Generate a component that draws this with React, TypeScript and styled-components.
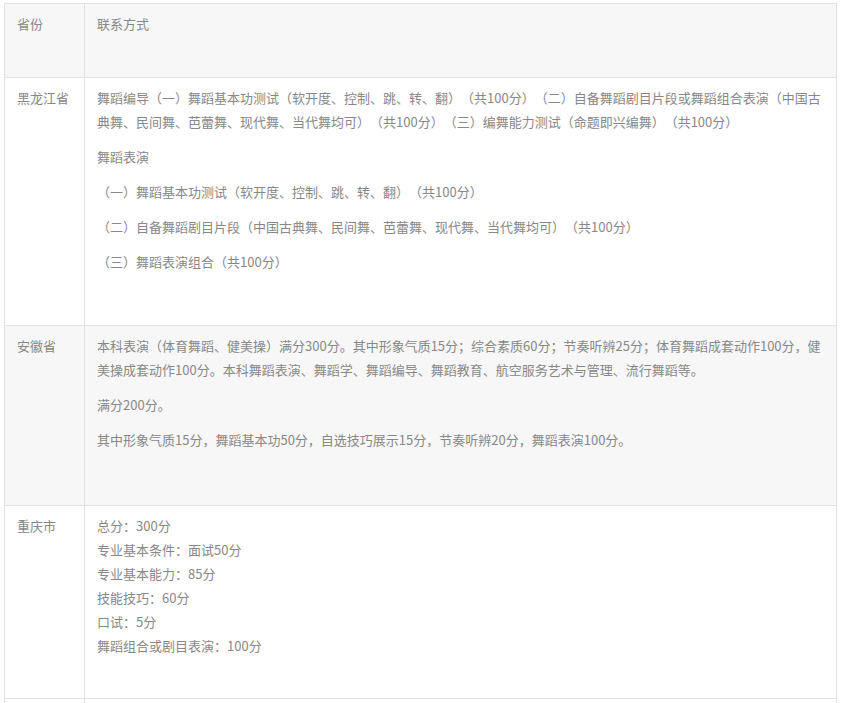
import React from 'react';
import styled, { createGlobalStyle } from 'styled-components';

const GlobalStyle = createGlobalStyle`
  body {
    margin: 0;
    background: #ffffff;
    font-family: "Noto Sans CJK SC", "Noto Sans", sans-serif;
  }
`;

const Wrapper = styled.div`
  padding: 3px 0 0 4px;
`;

const Table = styled.table`
  width: 833px;
  border-collapse: collapse;
  table-layout: fixed;
  font-size: 13px;
  line-height: 24px;
  color: #888;
  text-spacing-trim: space-all;
`;

const Row = styled.tr<{ $grey?: boolean; $h: number }>`
  height: ${(p) => p.$h}px;
  background: ${(p) => (p.$grey ? '#f7f7f7' : '#ffffff')};
`;

const Cell = styled.td`
  border: 1px solid #e2e2e2;
  padding: 8px 12px;
  vertical-align: top;
`;

const Para = styled.p`
  margin: 0 0 11px;
`;

const rows = [
  {
    province: '黑龙江省',
    grey: false,
    h: 248,
    paras: [
      '舞蹈编导（一）舞蹈基本功测试（软开度、控制、跳、转、翻）（共100分）（二）自备舞蹈剧目片段或舞蹈组合表演（中国古典舞、民间舞、芭蕾舞、现代舞、当代舞均可）（共100分）（三）编舞能力测试（命题即兴编舞）（共100分）',
      '舞蹈表演',
      '（一）舞蹈基本功测试（软开度、控制、跳、转、翻）（共100分）',
      '（二）自备舞蹈剧目片段（中国古典舞、民间舞、芭蕾舞、现代舞、当代舞均可）（共100分）',
      '（三）舞蹈表演组合（共100分）',
    ],
  },
  {
    province: '安徽省',
    grey: true,
    h: 180,
    paras: [
      '本科表演（体育舞蹈、健美操）满分300分。其中形象气质15分；综合素质60分；节奏听辨25分；体育舞蹈成套动作100分，健美操成套动作100分。本科舞蹈表演、舞蹈学、舞蹈编导、舞蹈教育、航空服务艺术与管理、流行舞蹈等。',
      '满分200分。',
      '其中形象气质15分，舞蹈基本功50分，自选技巧展示15分，节奏听辨20分，舞蹈表演100分。',
    ],
  },
];

const chongqing = [
  '总分：300分',
  '专业基本条件：面试50分',
  '专业基本能力：85分',
  '技能技巧：60分',
  '口试：5分',
  '舞蹈组合或剧目表演：100分',
];

const App = () => {
  return (
    <>
      <GlobalStyle />
      <Wrapper>
        <Table>
          <colgroup>
            <col style={{ width: 80 }} />
            <col />
          </colgroup>
          <tbody>
            <Row $grey $h={74}>
              <Cell>省份</Cell>
              <Cell>联系方式</Cell>
            </Row>
            {rows.map((r) => (
              <Row key={r.province} $grey={r.grey} $h={r.h}>
                <Cell>{r.province}</Cell>
                <Cell>
                  {r.paras.map((t) => (
                    <Para key={t}>{t}</Para>
                  ))}
                </Cell>
              </Row>
            ))}
            <Row $h={193}>
              <Cell>重庆市</Cell>
              <Cell>
                {chongqing.map((t, i) => (
                  <React.Fragment key={t}>
                    {t}
                    {i < chongqing.length - 1 && <br />}
                  </React.Fragment>
                ))}
              </Cell>
            </Row>
            <Row $h={40}>
              <Cell />
              <Cell />
            </Row>
          </tbody>
        </Table>
      </Wrapper>
    </>
  );
};

export default App;
